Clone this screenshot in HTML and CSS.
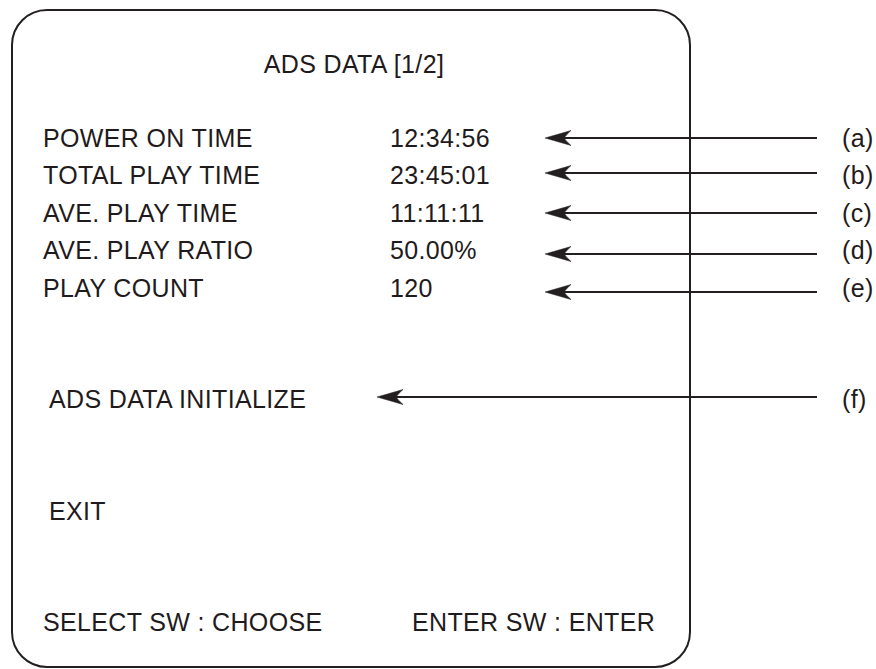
FILE: index.html
```html
<!DOCTYPE html>
<html lang="en">
<head>
  <meta charset="UTF-8">
  <meta name="viewport" content="width=device-width, initial-scale=1.0">
  <title>ADS DATA</title>
  <link rel="stylesheet" href="styles.css">
</head>
<body>
  <div class="panel">
    <h1 class="title">ADS DATA [1/2]</h1>

    <div class="rows">
      <div class="row">
        <span class="name">POWER ON TIME</span>
        <span class="value">12:34:56</span>
        <svg class="arrow" viewBox="0 0 272 16" preserveAspectRatio="none"><path d="M0 8 L26 0.5 Q21 5 19 8 Q21 11 26 15.5 Z"/><line x1="18" y1="8" x2="272" y2="8"/></svg>
        <span class="tag">(a)</span>
      </div>
      <div class="row">
        <span class="name">TOTAL PLAY TIME</span>
        <span class="value">23:45:01</span>
        <svg class="arrow up" viewBox="0 0 272 16" preserveAspectRatio="none"><path d="M0 8 L26 0.5 Q21 5 19 8 Q21 11 26 15.5 Z"/><line x1="18" y1="8" x2="272" y2="8"/></svg>
        <span class="tag">(b)</span>
      </div>
      <div class="row">
        <span class="name">AVE. PLAY TIME</span>
        <span class="value">11:11:11</span>
        <svg class="arrow" viewBox="0 0 272 16" preserveAspectRatio="none"><path d="M0 8 L26 0.5 Q21 5 19 8 Q21 11 26 15.5 Z"/><line x1="18" y1="8" x2="272" y2="8"/></svg>
        <span class="tag">(c)</span>
      </div>
      <div class="row">
        <span class="name">AVE. PLAY RATIO</span>
        <span class="value">50.00%</span>
        <svg class="arrow down" viewBox="0 0 272 16" preserveAspectRatio="none"><path d="M0 8 L26 0.5 Q21 5 19 8 Q21 11 26 15.5 Z"/><line x1="18" y1="8" x2="272" y2="8"/></svg>
        <span class="tag">(d)</span>
      </div>
      <div class="row">
        <span class="name">PLAY COUNT</span>
        <span class="value">120</span>
        <svg class="arrow down" viewBox="0 0 272 16" preserveAspectRatio="none"><path d="M0 8 L26 0.5 Q21 5 19 8 Q21 11 26 15.5 Z"/><line x1="18" y1="8" x2="272" y2="8"/></svg>
        <span class="tag">(e)</span>
      </div>
    </div>

    <div class="row-init">
      <span class="item">ADS DATA INITIALIZE</span>
      <svg class="arrow up" viewBox="0 0 440 16" preserveAspectRatio="none"><path d="M0 8 L26 0.5 Q21 5 19 8 Q21 11 26 15.5 Z"/><line x1="18" y1="8" x2="440" y2="8"/></svg>
      <span class="tag">(f)</span>
    </div>

    <div class="exit"><span class="item">EXIT</span></div>

    <div class="footer">
      <span>SELECT SW : CHOOSE</span>
      <span>ENTER SW : ENTER</span>
    </div>
  </div>
</body>
</html>
```

FILE: styles.css
```css
* {
  margin: 0;
  padding: 0;
  box-sizing: border-box;
}
body {
  background: #ffffff;
  color: #1f1b1c;
  font-family: "Liberation Sans", Arial, sans-serif;
  font-size: 25px;
  letter-spacing: 0.35px;
  line-height: 37.5px;
  overflow: hidden;
}
.panel {
  width: 680px;
  height: 659px;
  margin: 9px 0 0 11px;
  border: 2px solid #231f20;
  border-radius: 36px;
  padding: 35px 0 0 30px;
}
.title {
  font-size: 25px;
  font-weight: normal;
  text-align: center;
  margin-left: -24px;
}
.rows {
  width: 833px;
  margin-top: 36px;
}
.row {
  display: grid;
  grid-template-columns: 347px 155px 272px 1fr;
  align-items: center;
  height: 37.5px;
}
.arrow {
  display: block;
  width: 100%;
  height: 16px;
  fill: #231f20;
  stroke: #231f20;
}
.arrow path {
  stroke-width: 0.5;
}
.arrow line {
  stroke-width: 2.2;
}
.arrow.up {
  margin-top: -6px;
}
.arrow.down {
  margin-top: 7px;
}
.tag {
  padding-left: 25px;
}
.row-init {
  display: grid;
  grid-template-columns: 334px 440px 1fr;
  align-items: center;
  width: 833px;
  height: 37.5px;
  margin-top: 74px;
}
.item {
  padding-left: 6px;
}
.exit {
  height: 37.5px;
  margin-top: 74.5px;
}
.footer {
  display: grid;
  grid-template-columns: 369px 1fr;
  height: 37.5px;
  margin-top: 73.5px;
}
```
